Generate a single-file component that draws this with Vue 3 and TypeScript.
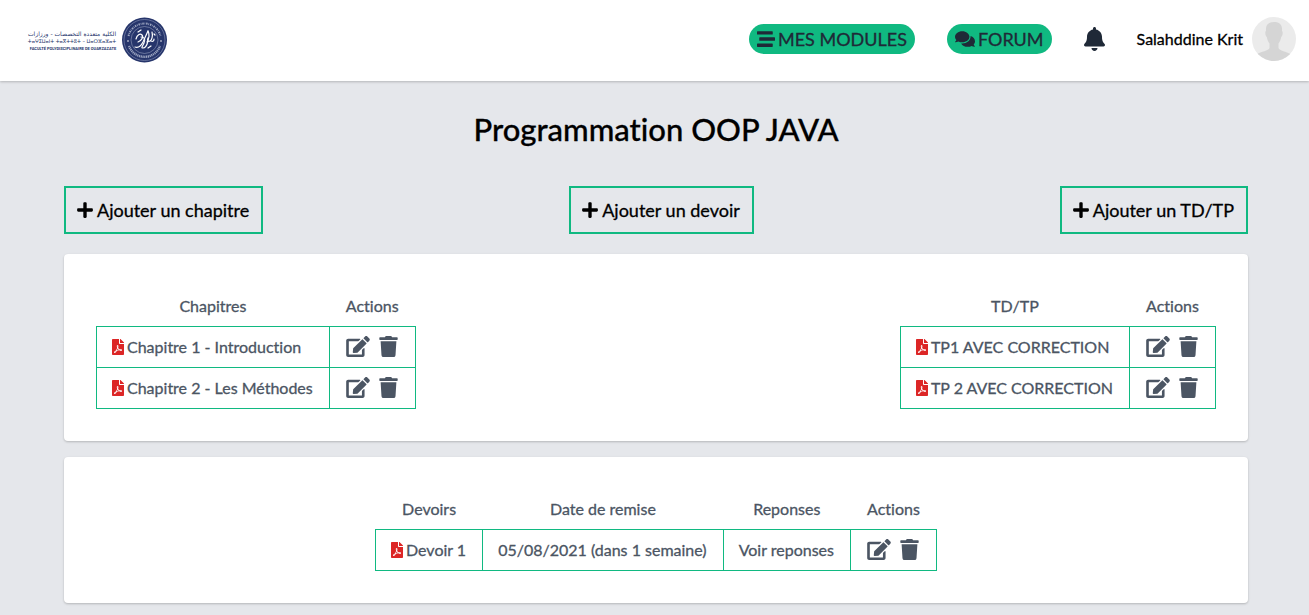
<script setup lang="ts">
interface Doc {
  id: number
  title: string
}

interface Assignment extends Doc {
  due: string
}

interface DocTable {
  heading: string
  rows: Doc[]
}

const icons = {
  stream: 'M16 128h416c8.84 0 16-7.16 16-16V48c0-8.84-7.16-16-16-16H16C7.16 32 0 39.16 0 48v64c0 8.84 7.16 16 16 16zm480 80H80c-8.84 0-16 7.16-16 16v64c0 8.84 7.16 16 16 16h416c8.84 0 16-7.16 16-16v-64c0-8.84-7.16-16-16-16zm-64 176H16c-8.84 0-16 7.16-16 16v64c0 8.84 7.16 16 16 16h416c8.84 0 16-7.16 16-16v-64c0-8.84-7.16-16-16-16z',
  comments: 'M416 192c0-88.4-93.1-160-208-160S0 103.6 0 192c0 34.3 14.1 65.9 38 92-13.4 30.2-35.5 54.2-35.8 54.5-2.2 2.3-2.8 5.7-1.5 8.7S4.8 352 8 352c36.6 0 66.9-12.3 88.7-25 32.2 15.7 70.3 25 111.3 25 114.9 0 208-71.6 208-160zm122 220c23.9-26 38-57.7 38-92 0-66.9-53.5-124.2-129.3-148.1.9 6.6 1.3 13.3 1.3 20.1 0 105.9-107.7 192-240 192-10.8 0-21.3-.8-31.7-1.9C207.8 439.6 281.8 480 368 480c41 0 79.1-9.2 111.3-25 21.8 12.7 52.1 25 88.7 25 3.2 0 6.1-1.9 7.3-4.8 1.3-2.9.7-6.3-1.5-8.7-.3-.3-22.4-24.2-35.8-54.5z',
  bell: 'M224 512c35.32 0 63.97-28.65 63.97-64H160.03c0 35.35 28.65 64 63.97 64zm215.39-149.71c-19.32-20.76-55.47-51.99-55.47-154.29 0-77.7-54.48-139.9-127.94-155.16V32c0-17.67-14.32-32-31.98-32s-31.98 14.33-31.98 32v20.84C118.56 68.1 64.08 130.3 64.08 208c0 102.3-36.15 133.53-55.47 154.29-6 6.45-8.66 14.16-8.61 21.71.11 16.4 12.98 32 32.1 32h383.8c19.12 0 32-15.6 32.1-32 .05-7.55-2.61-15.27-8.61-21.71z',
  plus: 'M416 208H272V64c0-17.67-14.33-32-32-32h-32c-17.67 0-32 14.33-32 32v144H32c-17.67 0-32 14.33-32 32v32c0 17.67 14.33 32 32 32h144v144c0 17.67 14.33 32 32 32h32c17.67 0 32-14.33 32-32V304h144c17.67 0 32-14.33 32-32v-32c0-17.67-14.33-32-32-32z',
  pdf: 'M181.9 256.1c-5-16-4.9-46.9-2-46.9 8.4 0 7.6 36.9 2 46.9zm-1.7 47.2c-7.7 20.2-17.3 43.3-28.4 62.7 18.3-7 39-17.2 62.9-21.9-12.7-9.6-24.9-23.4-34.5-40.8zM86.1 428.1c0 .8 13.2-5.4 34.9-40.2-6.7 6.3-29.1 24.5-34.9 40.2zM248 160h136v328c0 13.3-10.7 24-24 24H24c-13.3 0-24-10.7-24-24V24C0 10.7 10.7 0 24 0h200v136c0 13.2 10.8 24 24 24zm-8 171.8c-20-12.2-33.3-29-42.7-53.8 4.5-18.5 11.6-46.6 6.2-64.2-4.7-29.4-42.4-26.5-47.8-6.8-5 18.3-.4 44.1 8.1 77-11.6 27.6-28.7 64.6-40.8 85.8-.1 0-.1.1-.2.1-27.1 13.9-73.6 44.5-54.5 68 5.6 6.9 16 10 21.5 10 17.9 0 35.7-18 61.1-61.8 25.8-8.5 54.1-19.1 79-23.2 21.7 11.8 47.1 19.5 64 19.5 29.2 0 31.2-32 19.7-43.4-13.9-13.6-54.3-9.7-73.6-7.2zM377 105L279 7c-4.5-4.5-10.6-7-17-7h-6v128h128v-6.1c0-6.3-2.5-12.4-7-16.9z',
  edit: 'M402.6 83.2l90.2 90.2c3.8 3.8 3.8 10 0 13.8L274.4 405.6l-92.8 10.3c-12.4 1.4-22.9-9.1-21.5-21.5l10.3-92.8L388.8 83.2c3.8-3.8 10-3.8 13.8 0zm162-22.9l-48.8-48.8c-15.2-15.2-39.9-15.2-55.2 0l-35.4 35.4c-3.8 3.8-3.8 10 0 13.8l90.2 90.2c3.8 3.8 10 3.8 13.8 0l35.4-35.4c15.2-15.3 15.2-40 0-55.2zM384 346.2V448H64V128h229.8c3.2 0 6.2-1.3 8.5-3.5l40-40c7.6-7.6 2.2-20.5-8.5-20.5H48C21.5 64 0 85.5 0 112v352c0 26.5 21.5 48 48 48h352c26.5 0 48-21.5 48-48V306.2c0-10.7-12.9-16-20.5-8.5l-40 40c-2.2 2.3-3.5 5.3-3.5 8.5z',
  trash: 'M432 32H312l-9.4-18.7A24 24 0 0 0 281.1 0H166.8a23.72 23.72 0 0 0-21.4 13.3L136 32H16A16 16 0 0 0 0 48v32a16 16 0 0 0 16 16h416a16 16 0 0 0 16-16V48a16 16 0 0 0-16-16zM53.2 467a48 48 0 0 0 47.9 45h245.8a48 48 0 0 0 47.9-45L416 128H32z',
}

const addButtons: string[] = ['Ajouter un chapitre', 'Ajouter un devoir', 'Ajouter un TD/TP']

const tables: DocTable[] = [
  {
    heading: 'Chapitres',
    rows: [
      { id: 1, title: 'Chapitre 1 - Introduction' },
      { id: 2, title: 'Chapitre 2 - Les Méthodes' },
    ],
  },
  {
    heading: 'TD/TP',
    rows: [
      { id: 1, title: 'TP1 AVEC CORRECTION' },
      { id: 2, title: 'TP 2 AVEC CORRECTION' },
    ],
  },
]

const assignments: Assignment[] = [{ id: 1, title: 'Devoir 1', due: '05/08/2021 (dans 1 semaine)' }]
</script>

<template>
  <div class="page">
    <header class="navbar">
      <a class="brand" href="#" aria-label="Faculté Polydisciplinaire de Ouarzazate">
        <svg class="logo" viewBox="0 0 140 46" role="img">
          <g class="logo-text" text-anchor="middle">
            <text x="45" y="19" font-size="6">الكلية متعددة التخصصات - ورزازات</text>
            <text x="45" y="26" font-size="5">ⵜⴰⵖⵉⵡⴰⵏⵜ ⵜⴰⴳⵜⵜⵓⵜ – ⵡⴰⵔⵣⴰⵣⴰⵜ</text>
            <text class="latin" x="46" y="33" font-size="4">FACULTÉ POLYDISCIPLINAIRE DE OUARZAZATE</text>
          </g>
          <circle cx="117.500" cy="23" r="22.500" fill="#26356b" />
          <circle cx="117.500" cy="23" r="20.500" fill="none" stroke="#8c96b8" stroke-width=".6" />
          <path d="M101.500 19a16.500 16.500 0 0 1 32 0" fill="none" stroke="#c3c9dc" stroke-width="2" stroke-dasharray="1.500 .8 .7 .9" opacity=".75" />
          <path d="M102 29a16.500 16.500 0 0 0 31 0" fill="none" stroke="#c3c9dc" stroke-width="2.400" stroke-dasharray="1.200 .6" opacity=".75" />
          <circle cx="101" cy="24" r=".8" fill="#fff" />
          <circle cx="134" cy="24" r=".8" fill="#fff" />
          <circle cx="117.500" cy="23" r="13.500" fill="#26356b" stroke="#aab2cc" stroke-width=".5" />
          <g fill="none" stroke="#fff" stroke-width="1.200" stroke-linecap="round" stroke-linejoin="round">
            <path d="M108 30c3 1 6-1 8-5l5-11M109 22c1-4 4-6 6-4s-1 6-4 7" />
            <path d="M114 20c3 0 5 2 3 6s-3 5-1 5 4-3 5-7" />
            <path d="M121 14c2 3 1 8-1 11M125 15c1 4 0 8-2 9s-3-1-2-3M127 22c0 2-1 3-3 2" />
            <path d="M111 15l3-2M121 31l3-2M127 17l1 1" />
          </g>
        </svg>
      </a>
      <nav class="menu">
        <a class="pill" href="#">
          <svg class="pill-icon" viewBox="0 0 512 512" aria-hidden="true"><path :d="icons.stream" /></svg>
          <span>MES MODULES</span>
        </a>
        <a class="pill" href="#">
          <svg class="pill-icon wide" viewBox="0 0 576 512" aria-hidden="true"><path :d="icons.comments" /></svg>
          <span>FORUM</span>
        </a>
        <button class="icon-button" type="button" aria-label="Notifications">
          <svg class="bell" viewBox="0 0 448 512"><path :d="icons.bell" /></svg>
        </button>
        <a class="user" href="#">
          <span>Salahddine Krit</span>
          <svg class="avatar" viewBox="0 0 44 44" aria-hidden="true">
            <defs><clipPath id="avatar-clip"><circle cx="22" cy="22" r="22" /></clipPath></defs>
            <g clip-path="url(#avatar-clip)">
              <rect width="44" height="44" fill="#ebebeb" />
              <path fill="#d5d5d5" d="M22 5c6 0 8.500 3 8 9 1 0 1 5-.8 6-.5 3-1.500 5-2.700 6.500V31c1 3 8 3.500 12 6v7H5v-7c4-2.500 11.500-3 12.500-6v-4.500C16.300 25 15.300 23 14.800 20 13 19 13 14 14 14c-.5-6 2-9 8-9z" />
            </g>
          </svg>
        </a>
      </nav>
    </header>

    <main class="content">
      <h1>Programmation OOP JAVA</h1>

      <div class="add-row">
        <button v-for="label in addButtons" :key="label" class="add" type="button">
          <svg class="plus" viewBox="0 0 448 512" aria-hidden="true"><path :d="icons.plus" /></svg>
          <span>{{ label }}</span>
        </button>
      </div>

      <section class="card spread">
        <table v-for="table in tables" :key="table.heading">
          <thead>
            <tr>
              <th scope="col">{{ table.heading }}</th>
              <th scope="col">Actions</th>
            </tr>
          </thead>
          <tbody>
            <tr v-for="row in table.rows" :key="row.id">
              <td>
                <a class="doc" href="#">
                  <svg class="pdf" viewBox="0 0 384 512" aria-hidden="true"><path :d="icons.pdf" /></svg>
                  <span>{{ row.title }}</span>
                </a>
              </td>
              <td>
                <div class="actions">
                  <button class="icon-button" type="button" aria-label="Modifier">
                    <svg class="edit" viewBox="0 0 576 512"><path :d="icons.edit" /></svg>
                  </button>
                  <button class="icon-button" type="button" aria-label="Supprimer">
                    <svg class="trash" viewBox="0 0 448 512"><path :d="icons.trash" /></svg>
                  </button>
                </div>
              </td>
            </tr>
          </tbody>
        </table>
      </section>

      <section class="card centered">
        <table>
          <thead>
            <tr>
              <th scope="col">Devoirs</th>
              <th scope="col">Date de remise</th>
              <th scope="col">Reponses</th>
              <th scope="col">Actions</th>
            </tr>
          </thead>
          <tbody>
            <tr v-for="row in assignments" :key="row.id">
              <td>
                <a class="doc" href="#">
                  <svg class="pdf" viewBox="0 0 384 512" aria-hidden="true"><path :d="icons.pdf" /></svg>
                  <span>{{ row.title }}</span>
                </a>
              </td>
              <td>{{ row.due }}</td>
              <td><a href="#">Voir reponses</a></td>
              <td>
                <div class="actions">
                  <button class="icon-button" type="button" aria-label="Modifier">
                    <svg class="edit" viewBox="0 0 576 512"><path :d="icons.edit" /></svg>
                  </button>
                  <button class="icon-button" type="button" aria-label="Supprimer">
                    <svg class="trash" viewBox="0 0 448 512"><path :d="icons.trash" /></svg>
                  </button>
                </div>
              </td>
            </tr>
          </tbody>
        </table>
      </section>
    </main>
  </div>
</template>

<style>
body {
  margin: 0;
  background: #e5e7eb;
}
</style>

<style scoped>
.page {
  font-family: Lato, 'Liberation Sans', sans-serif;
  font-size: 16px;
  line-height: 24px;
  font-weight: 400;
  font-variant-ligatures: none;
  -webkit-text-stroke: 0.3px currentColor;
  color: #000;
}

a {
  color: inherit;
  text-decoration: none;
}

svg {
  display: block;
  flex-shrink: 0;
  fill: currentColor;
}

button {
  font: inherit;
  font-variant-ligatures: none;
  color: inherit;
  background: none;
  cursor: pointer;
}

.navbar {
  display: flex;
  align-items: flex-start;
  justify-content: space-between;
  padding: 17px 13px 18px 27px;
  background: #fff;
  box-shadow: 0 1px 3px rgba(0, 0, 0, 0.1), 0 1px 2px rgba(0, 0, 0, 0.12);
}

.logo {
  width: 140px;
  height: 46px;
}

.logo-text {
  font-family: 'DejaVu Sans', sans-serif;
  fill: #26356b;
  -webkit-text-stroke: 0;
}

.logo-text .latin {
  font-family: Roboto, sans-serif;
  font-weight: 700;
}

.menu {
  display: flex;
  align-items: center;
  gap: 32px;
}

.pill {
  display: flex;
  align-items: center;
  gap: 3px;
  padding: 1px 8px;
  border-radius: 16px;
  background: #10b981;
  color: #1f2937;
  font-size: 18px;
  line-height: 28px;
}

.pill-icon {
  width: 18px;
  height: 18px;
}

.pill-icon.wide {
  width: 20px;
}

.icon-button {
  padding: 0;
  border: 0;
}

.bell {
  width: 21px;
  height: 24px;
  fill: #1f2937;
}

.user {
  display: flex;
  align-items: center;
  gap: 9px;
}

.avatar {
  width: 44px;
  height: 44px;
}

.content {
  display: flex;
  flex-direction: column;
  padding: 28px 61px 12px 64px;
}

h1 {
  margin: 0 0 37px;
  font-size: 31px;
  line-height: 40px;
  font-weight: 500;
  text-align: center;
}

.add-row {
  display: flex;
  justify-content: space-between;
  margin-bottom: 20px;
}

.add {
  display: flex;
  align-items: center;
  gap: 4px;
  padding: 8px 12px 8px 11px;
  border: 2px solid #10b981;
  font-size: 18px;
  line-height: 28px;
}

.plus {
  width: 16px;
  height: 18px;
}

.card {
  display: flex;
  padding: 32px;
  border-radius: 4px;
  background: #fff;
  color: #4b5563;
  box-shadow: 0 1px 3px rgba(0, 0, 0, 0.1), 0 1px 2px rgba(0, 0, 0, 0.12);
}

.card + .card {
  margin-top: 16px;
}

.spread {
  justify-content: space-between;
}

.centered {
  justify-content: center;
}

table {
  border-collapse: collapse;
}

th {
  padding: 8px 15px;
  font-weight: 400;
}

td {
  padding: 8px 16px 8px 15px;
  border: 1px solid #10b981;
}

.doc {
  display: flex;
  align-items: center;
  gap: 3px;
}

.pdf {
  width: 12px;
  height: 16px;
  fill: #dc2626;
}

.actions {
  display: flex;
  align-items: center;
  gap: 9px;
  padding: 0 1px 2px;
}

.edit {
  width: 24px;
  height: 21px;
}

.trash {
  width: 19px;
  height: 21px;
}
</style>
